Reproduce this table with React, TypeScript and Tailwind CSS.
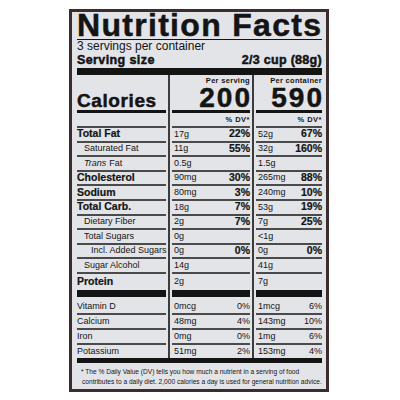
import { FC, ReactNode } from "react";

type Row = {
    label: ReactNode;
    bold?: boolean;
    indent?: number;
    a: string;
    ap?: string;
    b: string;
    bp?: string;
};

const rows: Row[] = [
    { label: "Total Fat", bold: true, a: "17g", ap: "22%", b: "52g", bp: "67%" },
    { label: "Saturated Fat", indent: 1, a: "11g", ap: "55%", b: "32g", bp: "160%" },
    {
        label: (
            <>
                <i className="mr-[3px]">Trans</i>Fat
            </>
        ),
        indent: 1,
        a: "0.5g",
        b: "1.5g",
    },
    { label: "Cholesterol", bold: true, a: "90mg", ap: "30%", b: "265mg", bp: "88%" },
    { label: "Sodium", bold: true, a: "80mg", ap: "3%", b: "240mg", bp: "10%" },
    { label: "Total Carb.", bold: true, a: "18g", ap: "7%", b: "53g", bp: "19%" },
    { label: "Dietary Fiber", indent: 1, a: "2g", ap: "7%", b: "7g", bp: "25%" },
    { label: "Total Sugars", indent: 1, a: "0g", b: "<1g" },
    { label: "Incl. Added Sugars", indent: 2, a: "0g", ap: "0%", b: "0g", bp: "0%" },
    { label: "Sugar Alcohol", indent: 1, a: "14g", b: "41g" },
];

const vitamins = [
    { label: "Vitamin D", a: "0mcg", ap: "0%", b: "1mcg", bp: "6%" },
    { label: "Calcium", a: "48mg", ap: "4%", b: "143mg", bp: "10%" },
    { label: "Iron", a: "0mg", ap: "0%", b: "1mg", bp: "6%" },
    { label: "Potassium", a: "51mg", ap: "2%", b: "153mg", bp: "4%" },
];

// big headings get a stroke to look like the heavy label face
const heavy = "font-bold [-webkit-text-stroke:0.5px_#141414]";
const semi = "font-bold [-webkit-text-stroke:0.2px_#141414]";
const line = "border-b-2 border-[#4a4a4a]";
const vitHeights = [
    "h-[18px] pt-[3px] " + line,
    "h-[15px] " + line,
    "h-[15px] " + line,
    "h-[13px]",
];

const Divider: FC = () => <div className="w-[2px] mx-[2px] bg-[#3c3c3c]" />;

const LabelColumn: FC = () => (
    <div className="w-[89px] flex flex-col">
        <div className="h-[38px] border-b-[3px] border-[#141414] flex items-end">
            <span className={`text-[19px] leading-[19px] tracking-[0.6px] ${heavy}`}>
                Calories
            </span>
        </div>
        <div className={`h-[15px] ${line}`} />
        {rows.map((r, i) => (
            <div
                key={i}
                className={`h-[14.6px] ${line} flex items-center whitespace-nowrap ${
                    r.indent === 2 ? "pl-[14px]" : r.indent === 1 ? "pl-[7px]" : ""
                } ${r.bold ? `text-[10.5px] ${semi}` : "text-[9px]"}`}
            >
                {r.label}
            </div>
        ))}
        <div className={`h-[16px] flex items-center text-[10.5px] ${semi}`}>Protein</div>
        <div className="h-[7px] bg-[#141414]" />
        {vitamins.map((v, i) => (
            <div key={i} className={`${vitHeights[i]} flex items-center text-[9px]`}>
                {v.label}
            </div>
        ))}
    </div>
);

interface ValueColumnProps {
    width: string;
    title: string;
    calories: string;
    side: "a" | "b";
}

const ValueColumn: FC<ValueColumnProps> = ({ width, title, calories, side }) => (
    <div className={`${width} flex flex-col`}>
        <div className="h-[38px] border-b-[3px] border-[#141414] flex flex-col items-end pt-[1px]">
            <div className="h-[9px] text-[7.5px] leading-[9px] tracking-[0.3px] font-bold">
                {title}
            </div>
            <div
                className={`h-[25px] text-[28px] leading-[26px] tracking-[2px] mr-[-2px] ${heavy}`}
            >
                {calories}
            </div>
        </div>
        <div
            className={`h-[15px] ${line} flex items-center justify-end text-[7.5px] tracking-[0.5px] font-bold`}
        >
            % DV*
        </div>
        {rows.map((r, i) => (
            <div
                key={i}
                className={`h-[14.6px] ${line} flex items-center justify-between pl-[2px] text-[9px]`}
            >
                <span>{side === "a" ? r.a : r.b}</span>
                <span className={`text-[10.5px] ${semi}`}>{side === "a" ? r.ap : r.bp}</span>
            </div>
        ))}
        <div className="h-[16px] flex items-center pl-[2px] text-[9px]">
            {side === "a" ? "2g" : "7g"}
        </div>
        <div className="h-[7px] bg-[#141414]" />
        {vitamins.map((v, i) => (
            <div
                key={i}
                className={`${vitHeights[i]} flex items-center justify-between pl-[2px] text-[9px]`}
            >
                <span>{side === "a" ? v.a : v.b}</span>
                <span>{side === "a" ? v.ap : v.bp}</span>
            </div>
        ))}
    </div>
);

const App: FC = () => {
    return (
        <div className="w-[400px] h-[400px] bg-white pt-[9px] pl-[69px] font-['Liberation_Sans',Arial,sans-serif] text-[#141414]">
            <div className="w-[260px] h-[383px] border-[3px] border-[#3b2c2e] bg-[#e3e4e8] pl-[5px] pr-[4px] flex flex-col">
                <div className="h-[28px] border-b border-[#141414]">
                    <div
                        className={`text-[32px] leading-[27px] tracking-[1.3px] whitespace-nowrap ${heavy}`}
                    >
                        Nutrition Facts
                    </div>
                </div>
                <div className="h-[13px] text-[12px] leading-[13px]">3 servings per container</div>
                <div
                    className={`h-[14px] flex justify-between items-center text-[12.5px] leading-[14px] ${heavy}`}
                >
                    <span className="tracking-[0.4px]">Serving size</span>
                    <span className="tracking-[0.3px]">2/3 cup (88g)</span>
                </div>
                <div className="h-[7px] mt-[1px] bg-[#141414]" />
                <div className="flex">
                    <LabelColumn />
                    <Divider />
                    <ValueColumn width="w-[78px]" title="Per serving" calories="200" side="a" />
                    <Divider />
                    <ValueColumn width="w-[66px]" title="Per container" calories="590" side="b" />
                </div>
                <div className="h-[5px] bg-[#141414]" />
                <div className="pt-[4px] pl-[4px] text-[6.6px] leading-[10px] whitespace-nowrap">
                    <div>* The % Daily Value (DV) tells you how much a nutrient in a serving of food</div>
                    <div className="pl-[1px]">
                        contributes to a daily diet. 2,000 calories a day is used for general nutrition advice.
                    </div>
                </div>
            </div>
        </div>
    );
};

export default App;
